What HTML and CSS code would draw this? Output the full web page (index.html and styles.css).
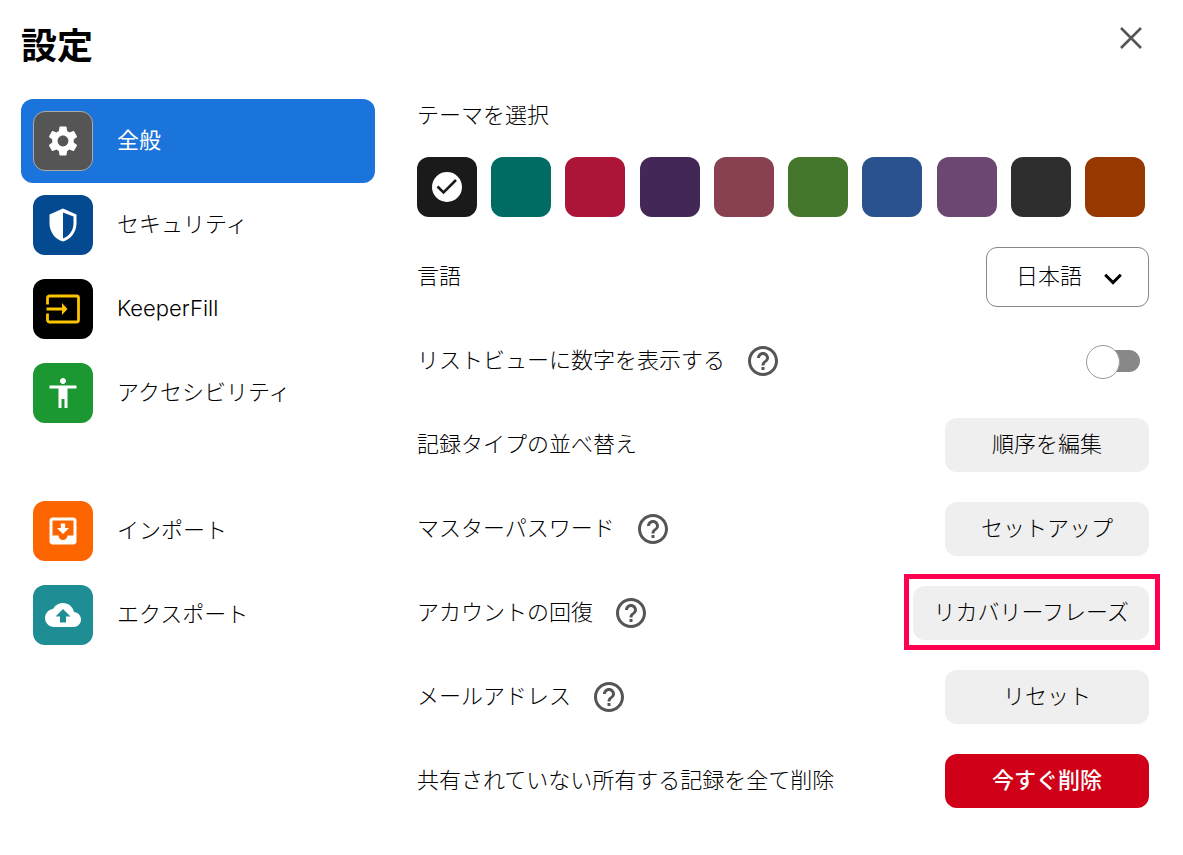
FILE: index.html
```html
<!DOCTYPE html>
<html lang="ja">
<head>
    <meta charset="UTF-8">
    <meta name="viewport" content="width=device-width, initial-scale=1.0">
    <title>設定</title>
    <link rel="stylesheet" href="styles.css">
</head>
<body>
    <header class="header">
        <h1 class="title">設定</h1>
        <button class="close" type="button" aria-label="閉じる">
            <svg width="24" height="24" viewBox="0 0 24 24"><path d="M2 2l20 20M22 2L2 22" fill="none" stroke="#555" stroke-width="2.6"/></svg>
        </button>
    </header>

    <div class="layout">
        <nav class="menu">
            <a class="menu-item active" href="#general">
                <span class="tile general"><svg width="36" height="36" viewBox="0 0 24 24"><path d="M19.14 12.94c.04-.3.06-.61.06-.94 0-.32-.02-.64-.07-.94l2.03-1.58c.18-.14.23-.41.12-.61l-1.92-3.32c-.12-.22-.37-.29-.59-.22l-2.39.96c-.5-.38-1.03-.7-1.62-.94l-.36-2.54c-.04-.24-.24-.41-.48-.41h-3.84c-.24 0-.43.17-.47.41l-.36 2.54c-.59.24-1.13.57-1.62.94l-2.39-.96c-.22-.08-.47 0-.59.22L2.74 8.87c-.12.21-.08.47.12.61l2.03 1.58c-.05.3-.09.63-.09.94s.02.64.07.94l-2.03 1.58c-.18.14-.23.41-.12.61l1.92 3.32c.12.22.37.29.59.22l2.39-.96c.5.38 1.03.7 1.62.94l.36 2.54c.05.24.24.41.48.41h3.84c.24 0 .44-.17.47-.41l.36-2.54c.59-.24 1.13-.56 1.62-.94l2.39.96c.22.08.47 0 .59-.22l1.92-3.32c.12-.22.07-.47-.12-.61l-2.01-1.58zM12 15.6c-1.98 0-3.6-1.62-3.6-3.6s1.62-3.6 3.6-3.6 3.6 1.62 3.6 3.6-1.62 3.6-3.6 3.6z"/></svg></span>
                <span class="text">全般</span>
            </a>
            <a class="menu-item" href="#security">
                <span class="tile security"><svg width="36" height="36" viewBox="0 0 24 24"><path fill-rule="evenodd" d="M12 1L3 5v6c0 5.55 3.84 10.74 9 12 5.16-1.26 9-6.45 9-12V5l-9-4zm0 2.700l7 2.600V11c0 4.520-2.980 8.690-7 9.930z"/></svg></span>
                <span class="text">セキュリティ</span>
            </a>
            <a class="menu-item" href="#keeperfill">
                <span class="tile fill"><svg width="36" height="36" viewBox="0 0 36 36"><path d="M2.500 13.500V7a2 2 0 0 1 2-2h27a2 2 0 0 1 2 2v22a2 2 0 0 1-2 2h-27a2 2 0 0 1-2-2v-6.500M1.500 18h17" fill="none" stroke="#fdc400" stroke-width="2.800"/><path d="M17 12l5.500 6-5.500 6z" fill="#fdc400"/></svg></span>
                <span class="text">KeeperFill</span>
            </a>
            <a class="menu-item" href="#accessibility">
                <span class="tile access"><svg width="36" height="36" viewBox="0 0 24 24"><path d="M12 2c1.100 0 2 .9 2 2s-.9 2-2 2-2-.9-2-2 .9-2 2-2zm9 7h-6v13h-2v-6h-2v6H9V9H3V7h18v2z"/></svg></span>
                <span class="text">アクセシビリティ</span>
            </a>
            <a class="menu-item split" href="#import">
                <span class="tile import"><svg width="36" height="36" viewBox="0 0 24 24"><path d="M16 10h-2.550V7h-2.900v3H8l4 4zm3-7H5c-1.100 0-2 .9-2 2v14c0 1.100.9 2 2 2h14c1.100 0 2-.9 2-2V5c0-1.100-.9-2-2-2zm0 12h-4c0 1.660-1.350 3-3 3s-3-1.340-3-3H5V5h14v10z"/></svg></span>
                <span class="text">インポート</span>
            </a>
            <a class="menu-item" href="#export">
                <span class="tile export"><svg width="36" height="36" viewBox="0 0 24 24"><path d="M19.350 10.040C18.670 6.590 15.640 4 12 4 9.110 4 6.600 5.640 5.350 8.040 2.340 8.360 0 10.910 0 14c0 3.310 2.690 6 6 6h13c2.760 0 5-2.240 5-5 0-2.640-2.050-4.780-4.650-4.960zM14 13v4h-4v-4H7l5-5 5 5h-3z"/></svg></span>
                <span class="text">エクスポート</span>
            </a>
        </nav>

        <main class="settings">
            <fieldset class="themes">
                <legend class="theme-title">テーマを選択</legend>
                <div class="swatches">
                    <label class="swatch">
                        <input class="c1" type="radio" name="theme" aria-label="ブラック" checked>
                        <svg class="check" width="36" height="36" viewBox="0 0 36 36"><circle cx="18" cy="18" r="15" fill="#fff"/><path d="M8.500 17.500l6 6L27 11" fill="none" stroke="#1a1a1a" stroke-width="2.600"/></svg>
                    </label>
                    <label class="swatch"><input class="c2" type="radio" name="theme" aria-label="ティール"></label>
                    <label class="swatch"><input class="c3" type="radio" name="theme" aria-label="レッド"></label>
                    <label class="swatch"><input class="c4" type="radio" name="theme" aria-label="パープル"></label>
                    <label class="swatch"><input class="c5" type="radio" name="theme" aria-label="ローズ"></label>
                    <label class="swatch"><input class="c6" type="radio" name="theme" aria-label="グリーン"></label>
                    <label class="swatch"><input class="c7" type="radio" name="theme" aria-label="ブルー"></label>
                    <label class="swatch"><input class="c8" type="radio" name="theme" aria-label="ライラック"></label>
                    <label class="swatch"><input class="c9" type="radio" name="theme" aria-label="ダーク"></label>
                    <label class="swatch"><input class="c10" type="radio" name="theme" aria-label="ブラウン"></label>
                </div>
            </fieldset>

            <!-- shared help icon -->
            <svg class="defs" width="0" height="0">
                <symbol id="help" viewBox="0 0 24 24"><path d="M11 18h2v-2h-2v2zm1-16C6.480 2 2 6.480 2 12s4.480 10 10 10 10-4.480 10-10S17.520 2 12 2zm0 18c-4.410 0-8-3.590-8-8s3.590-8 8-8 8 3.590 8 8-3.590 8-8 8zm0-14c-2.210 0-4 1.790-4 4h2c0-1.100.9-2 2-2s2 .9 2 2c0 2-3 1.750-3 5h2c0-2.250 3-2.500 3-5 0-2.210-1.790-4-4-4z"/></symbol>
            </svg>

            <div class="row">
                <label class="text" for="language">言語</label>
                <div class="select-wrap">
                    <select id="language" class="language">
                        <option>日本語</option>
                    </select>
                    <svg class="chevron" width="18" height="12" viewBox="0 0 18 12"><path d="M1.200 1.800L9 9.600l7.800-7.800" fill="none" stroke="#000" stroke-width="3"/></svg>
                </div>
            </div>
            <div class="row">
                <label class="text" for="numbers">リストビューに数字を表示する</label>
                <button class="help" type="button" aria-label="ヘルプ"><svg width="36" height="36"><use href="#help"/></svg></button>
                <input id="numbers" class="toggle" type="checkbox" role="switch">
            </div>
            <div class="row">
                <span class="text">記録タイプの並べ替え</span>
                <button class="btn" type="button">順序を編集</button>
            </div>
            <div class="row">
                <span class="text">マスターパスワード</span>
                <button class="help" type="button" aria-label="ヘルプ"><svg width="36" height="36"><use href="#help"/></svg></button>
                <button class="btn" type="button">セットアップ</button>
            </div>
            <div class="row">
                <span class="text">アカウントの回復</span>
                <button class="help" type="button" aria-label="ヘルプ"><svg width="36" height="36"><use href="#help"/></svg></button>
                <button class="btn marked" type="button">リカバリーフレーズ</button>
            </div>
            <div class="row">
                <span class="text">メールアドレス</span>
                <button class="help" type="button" aria-label="ヘルプ"><svg width="36" height="36"><use href="#help"/></svg></button>
                <button class="btn" type="button">リセット</button>
            </div>
            <div class="row">
                <span class="text">共有されていない所有する記録を全て削除</span>
                <button class="btn danger" type="button">今すぐ削除</button>
            </div>
        </main>
    </div>
</body>
</html>
```
FILE: styles.css
```css
* {
    box-sizing: border-box;
}

body {
    margin: 0;
    padding: 0 34px 0 21px;
    background: #fff;
    color: #000;
    font-family: Inter, "Noto Sans CJK JP", sans-serif;
    font-size: 22px;
    font-weight: 300;
    line-height: 32px;
}

button, select {
    font: inherit;
    color: inherit;
    border: 0;
    cursor: pointer;
}

svg {
    display: block;
}

.header {
    display: flex;
    justify-content: space-between;
    align-items: flex-start;
    height: 99px;
}

.title {
    margin: 0;
    padding-top: 22px;
    font-size: 36px;
    font-weight: 700;
    line-height: 48px;
}

.close {
    margin-top: 20px;
    padding: 6px;
    background: none;
}

.layout {
    display: flex;
    gap: 42px;
}

/* left menu */
.menu {
    flex: 0 0 354px;
}

.menu-item {
    display: flex;
    align-items: center;
    gap: 24px;
    height: 84px;
    padding: 0 12px;
    border-radius: 12px;
    color: #000;
    text-decoration: none;
}

.menu-item.active {
    background: #1b74dc;
    color: #fff;
    font-weight: 400;
}

.menu-item.split {
    margin-top: 54px;
}

.tile {
    display: flex;
    align-items: center;
    justify-content: center;
    width: 60px;
    height: 60px;
    border-radius: 12px;
    fill: #fff;
}

.general {
    background: #555;
    border: 1px solid #aaa;
}

.security { background: #044a91; }
.fill { background: #000; }
.access { background: #1c9833; }
.import { background: #fc6500; }
.export { background: #1f8d94; }

.text {
    padding-bottom: 2px;
}

/* right side */
.settings {
    flex: 1;
    min-width: 0;
}

.themes {
    margin: 0 0 18px;
    padding: 0 4px 0 0;
    border: 0;
}

.theme-title {
    padding: 0;
    margin-bottom: 26px;
}

.swatches {
    display: flex;
    justify-content: space-between;
}

.swatch {
    position: relative;
    cursor: pointer;
}

.swatch input {
    display: block;
    appearance: none;
    width: 60px;
    height: 60px;
    margin: 0;
    border-radius: 12px;
}

.check {
    position: absolute;
    top: 12px;
    left: 12px;
}

.c1 { background: #1a1a1a; }
.c2 { background: #006c64; }
.c3 { background: #ad1538; }
.c4 { background: #432857; }
.c5 { background: #894150; }
.c6 { background: #44772b; }
.c7 { background: #29528f; }
.c8 { background: #6b4772; }
.c9 { background: #2e2e2e; }
.c10 { background: #973800; }

.defs {
    position: absolute;
}

.row {
    display: flex;
    align-items: center;
    height: 84px;
}

.row > :last-child {
    margin-left: auto;
}

.help {
    margin-left: 20px;
    padding: 0;
    background: none;
    fill: #555;
}

.select-wrap {
    position: relative;
}

.language {
    display: block;
    appearance: none;
    width: 163px;
    height: 60px;
    padding: 0 60px 2px 29px;
    border: 1px solid #888;
    border-radius: 11px;
    background: #fff;
}

.chevron {
    position: absolute;
    top: 26px;
    right: 27px;
    pointer-events: none;
}

.row > .toggle {
    appearance: none;
    position: relative;
    width: 50px;
    height: 22px;
    margin: 0 9px 0 auto;
    border-radius: 11px;
    background: #888;
}

.toggle::before {
    content: "";
    position: absolute;
    top: -5px;
    left: -4px;
    width: 32px;
    height: 32px;
    border: 1px solid #999;
    border-radius: 50%;
    background: #fff;
}

.toggle:checked::before {
    left: 22px;
}

.btn {
    min-width: 204px;
    height: 54px;
    padding: 0 20px 2px;
    border-radius: 12px;
    background: #efefef;
}

.danger {
    background: #cf0018;
    color: #fff;
    font-weight: 500;
}

/* red frame around the recovery phrase button */
.marked {
    position: relative;
}

.marked::after {
    content: "";
    position: absolute;
    inset: -12px -11px -10px -9px;
    border: 5px solid #ff0050;
}
```
